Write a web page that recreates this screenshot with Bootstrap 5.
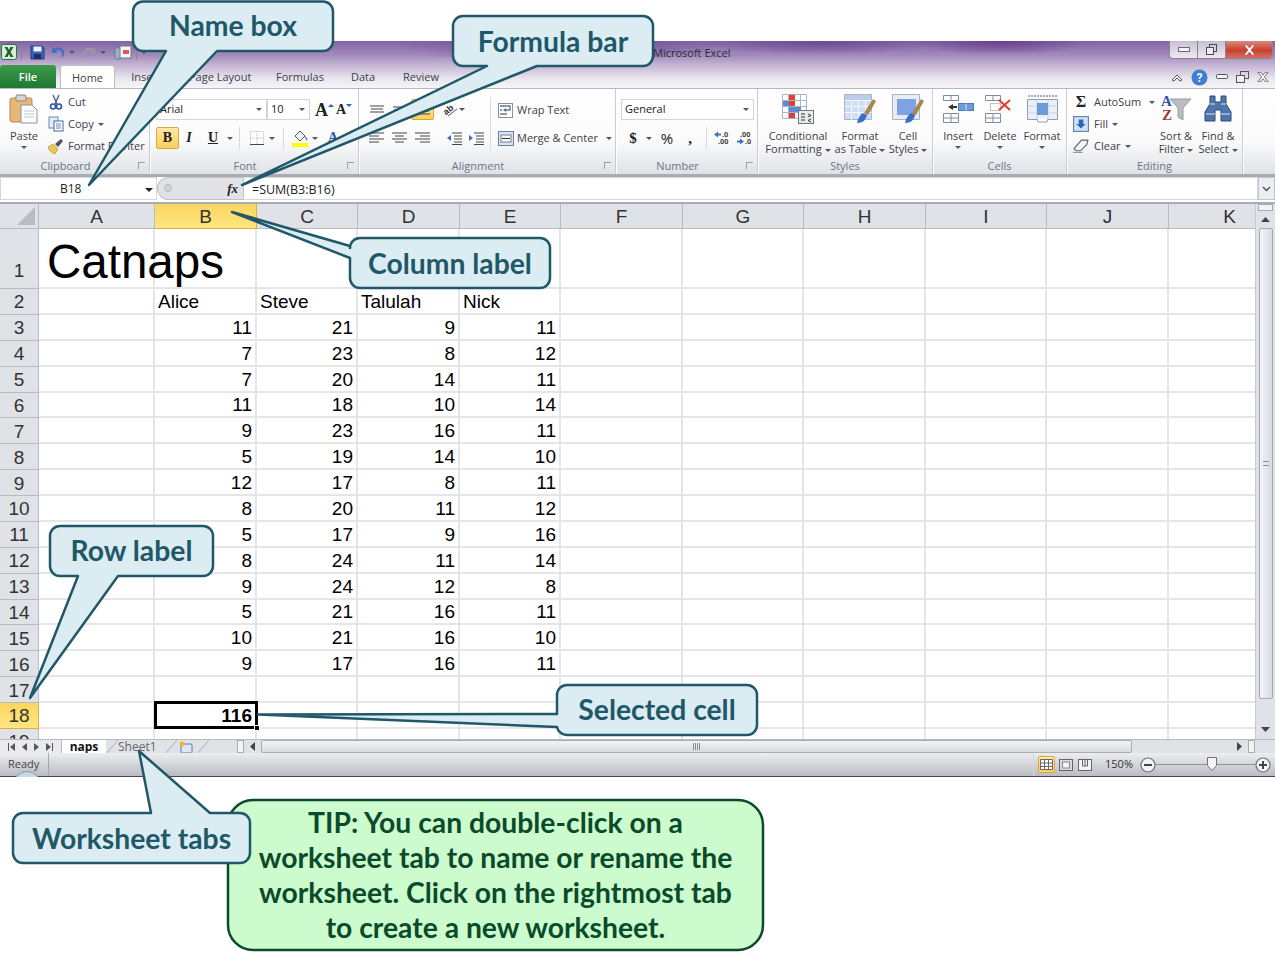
<!DOCTYPE html>
<html lang="en">
<head>
  <meta charset="UTF-8" />
  <meta name="viewport" content="width=device-width, initial-scale=1" />
  <title>Excel worksheet parts</title>
  <link href="https://cdn.jsdelivr.net/npm/bootstrap@5.3.0/dist/css/bootstrap.min.css" rel="stylesheet" />
  <style>
    body { background: #fff; font-family: "Open Sans", sans-serif; font-size: 11px; color: #3c4148; }
    .xl-page { position: relative; width: 1275px; height: 963px; overflow: hidden; }
    .xl-window { position: absolute; left: 0; top: 41px; width: 1275px; height: 736px; }

    /* title bar */
    .xl-title { height: 24px; padding-left: 1px; position: relative;
      background:
        radial-gradient(ellipse 90px 14px at 1000px 0, #6a3f8c, transparent),
        radial-gradient(ellipse 120px 14px at 820px 0, #6f4a92, transparent),
        radial-gradient(ellipse 160px 18px at 560px 4px, #6f4a92, transparent),
        linear-gradient(180deg, #8064a4 0, #a28bbc 60%, #c4b5d3 100%); }
    .xl-qat { height: 22px; }
    .q-save { margin-left: 0; }
    .q-undo { margin-left: 6px; }
    .xl-doc-title { position: absolute; left: 653px; top: 4px; font-size: 11px; color: #2c2c2c; }
    .xl-winbtns { position: absolute; left: 1169px; top: 0; width: 104px; height: 18px; border: 1px solid #8b8298; border-top: 0; border-radius: 0 0 4px 4px; background: linear-gradient(180deg, #c7bfd0, #eeeaf1); }
    .xl-winbtns > div { height: 100%; width: 28px; display: flex; align-items: center; justify-content: center; border-right: 1px solid #8b8298; }
    .xl-winbtns > .xl-close { width: 46px; border: 0; border-radius: 0 0 3px 0; background: linear-gradient(180deg, #d98a80, #c8402f 55%, #d76f60); color: #fff; }

    /* ribbon tabs */
    .xl-tabs { height: 23px; background: linear-gradient(180deg, #c4b5d3 0, #eae6ee 60%, #f6f5f7 100%); position: relative; }
    .xl-tab { height: 23px; line-height: 24px; text-align: center; color: #3c4148; white-space: nowrap; }
    .xl-tab-file { width: 56px; background: linear-gradient(180deg, #3c9a4c, #1d7a30); color: #fff; font-weight: 600; border-radius: 3px 3px 0 0; margin-right: 4px; }
    .xl-tab-home { width: 55px; background: #fff; border: 1px solid #b9bec4; border-bottom: 0; border-radius: 3px 3px 0 0; }
    .xl-t-ins { width: 52px; padding-left: 10px; }
    .xl-t-page { width: 83px; padding-left: 22px; }
    .xl-t-form { width: 78px; padding-left: 22px; }
    .xl-t-data { width: 50px; padding-left: 20px; }
    .xl-t-rev { width: 64px; padding-left: 22px; }
    .xl-t-view { width: 50px; padding-left: 30px; }
    .xl-tabicons { position: absolute; left: 1167px; top: 1px; width: 106px; height: 22px; }

    /* ribbon */
    .xl-ribbon { height: 89px; display: flex; border-top: 1px solid #b4b9bf; border-bottom: 3px solid #a9adb3; background: linear-gradient(180deg, #fff 0, #fbfbfc 60%, #dfe2e6 100%); }
    .rb-group { display: flex; flex-direction: column; border-right: 1px solid #c9ccd0; box-shadow: 1px 0 0 #fff; flex-shrink: 0; }
    .rb-main { height: 70px; display: flex; }
    .rb-label { height: 15px; line-height: 14px; text-align: center; color: #6b7584; position: relative; }
    .rb-label-l { padding-right: 18px; }
    .rb-launch { position: absolute; right: 4px; top: 3px; width: 7px; height: 7px; border: 1px solid #9aa0a8; border-width: 1px 0 0 1px; }
    .rb-clip { width: 150px; } .rb-font { width: 209px; } .rb-align { width: 257px; }
    .rb-num { width: 142px; } .rb-styles { width: 175px; } .rb-cells { width: 134px; } .rb-edit { width: 176px; }
    .rb-big { display: flex; flex-direction: column; align-items: center; padding-top: 5px; line-height: 13px; text-align: center; white-space: nowrap; flex-shrink: 0; }
    .rb-big svg { height: 30px; margin-bottom: 5px; flex-shrink: 0; }
    .rb-small { height: 22px; display: flex; align-items: center; white-space: nowrap; }
    .rb-small svg { flex-shrink: 0; }
    .xl-caret { display: inline-block; width: 0; height: 0; border: 3px solid transparent; border-top: 3px solid #555; border-bottom: 0; vertical-align: middle; }
    .rb-combo { height: 21px; background: #fff; border: 1px solid #d1d4d8; display: flex; align-items: center; justify-content: space-between; padding: 0 4px 0 3px; color: #222; }
    .rb-sep { width: 1px; height: 22px; background: #d8dadd; flex-shrink: 0; }
    .rb-on { background: linear-gradient(180deg, #fde9a8, #fbcf5c); border: 1px solid #d9a63f; border-radius: 2px; }
    .rb-serif { font-family: "Liberation Serif", serif; font-weight: 700; color: #222; line-height: 1; }
    .rb-row { display: flex; align-items: center; }

    .c-paste { width: 48px; padding-top: 5px; }
    .c-stack { padding-top: 2px; }
    .c-stack svg { width: 16px; height: 16px; margin-right: 4px; }
    .f-col { padding: 10px 0 0 6px; }
    .f-name { width: 111px; } .f-size { width: 43px; margin-right: 5px; }
    .f-grow { width: 16px; height: 21px; display: flex; align-items: center; font-size: 18px; flex-shrink: 0; }
    .f-shrink { width: 16px; height: 21px; margin-left: 5px; display: flex; align-items: center; font-size: 14px; flex-shrink: 0; }
    .f-grow svg, .f-shrink svg { align-self: start; margin-top: 4px; flex-shrink: 0; }
    .f-b { width: 23px; height: 22px; font-size: 14px; display: flex; align-items: center; justify-content: center; }
    .f-row2 { margin-top: 7px; height: 22px; }
    .f-btn { display: flex; align-items: center; justify-content: center; font-size: 14px; flex-shrink: 0; }
    .f-i { width: 20px; font-style: italic; }
    .f-u { width: 28px; text-decoration: underline; }
    .f-sep1 { margin-left: 6px; }
    .f-bord { margin-left: 10px; }
    .f-car2 { margin-left: 5px; }
    .f-sep2 { margin-left: 8px; }
    .f-fill { margin-left: 8px; }
    .f-car3 { margin-left: 3px; }
    .f-col-a { width: 20px; margin-left: 5px; color: #2d55a8; }
    .f-col-a span { border-bottom: 2px solid #d8392b; line-height: 13px; }
    .a-col { padding: 10px 0 0 6px; width: 125px; flex-shrink: 0; }
    .a-cell { width: 23px; height: 21px; display: flex; align-items: center; justify-content: center; flex-shrink: 0; }
    .a-in1 { margin-left: 13px; }
    .a-in2 { margin-left: 7px; }
    .a-sep { margin: 8px 0 8px 6px; }
    .w-col { padding: 11px 0 0 7px; }
    .w-col svg { margin-right: 3px; }
    .w-row { height: 21px; }
    .n-col { padding: 10px 0 0 5px; }
    .n-combo { width: 133px; }
    .n-cell { display: flex; align-items: center; justify-content: center; flex-shrink: 0; font-size: 15px; color: #222; }
    .n-d { width: 24px; } .n-c { width: 8px; } .n-p { width: 28px; } .n-k { width: 18px; }
    .n-sep { margin-left: 7px; } .n-dec1 { margin-left: 7px; } .n-dec2 { margin-left: 5px; }
    .s-cond { width: 72px; margin-left: 4px; } .s-tab { width: 52px; } .s-cell { width: 44px; }
    .c-ins { width: 42px; margin-left: 4px; } .c-del, .c-fmt { width: 42px; }
    .e-stack { width: 84px; margin-left: 5px; flex-shrink: 0; }
    .e-icon { width: 22px; padding-right: 4px; display: flex; justify-content: center; flex-shrink: 0; }
    .e-icon svg { margin-right: 0; }
    .e-sort { width: 40px; } .e-find { width: 44px; }

    /* formula bar */
    .xl-fbar { height: 26px; display: flex; padding: 0 0 1px; background: #fff; border-bottom: 1px solid #a9adb3; font-size: 12.5px; }
    .xl-namebox { width: 157px; height: 23px; display: flex; align-items: center; position: relative; padding-left: 59px; color: #222; border: 1px solid #d4d7db; font-size: 12px; }
    .xl-namebox .xl-caret { position: absolute; right: 3px; top: 10px; border-width: 4px; border-top-color: #222; border-bottom: 0; }
    .xl-fx { width: 86px; height: 23px; background: #e0e2e6; border-radius: 12px 0 0 12px; border: 1px solid #c0c4c9; border-right: 0; display: flex; align-items: center; justify-content: end; padding-right: 5px; font-family: "Liberation Serif", serif; font-style: italic; font-weight: 700; font-size: 13px; color: #222; position: relative; }
    .xl-fx::before { content: ""; position: absolute; left: 6px; top: 6px; width: 8px; height: 8px; border-radius: 50%; background: #cfd2d6; border: 1px solid #b5b9be; }
    .xl-input { flex: 1; height: 23px; line-height: 23px; padding-left: 8px; color: #222; border: 1px solid #d4d7db; border-left: 1px solid #c0c4c9; }
    .xl-fdrop { width: 17px; height: 23px; border: 1px solid #c0c4c9; background: #eceef1; display: flex; align-items: center; justify-content: center; }

    /* sheet */
    .xl-body { height: 536px; display: flex; border-top: 1px solid #a9adb3; }
    .xl-sheet { width: 1255px; height: 535px; overflow: hidden; display: grid;
      grid-template-columns: 39px 116px 102px 101px 102px 101px 122px 121px 122px 121px 122px 122px;
      grid-template-rows: 25px 60px repeat(18, 25.875px);
      font-family: "Liberation Sans", sans-serif; font-size: 19px; color: #000; }
    .xl-cell { border-right: 2px solid #e4e5e7; border-bottom: 2px solid #e4e5e7; padding: 1px 3px 0; display: flex; align-items: center; line-height: 1; position: relative; white-space: nowrap; overflow: visible; }
    .xl-num { justify-content: end; padding-right: 3px; }
    .xl-head { background: #dfe2e7; border-right: 1px solid #b8bcc1; border-bottom: 1px solid #b8bcc1; justify-content: center; color: #333; }
    .xl-row-1 { align-items: end; padding-bottom: 8px; }
    .xl-head-on { background: linear-gradient(180deg, #fbd560, #fee682); border-color: #e0ad45; }
    .xl-corner { position: relative; }
    .xl-corner::after { content: ""; position: absolute; right: 3px; bottom: 3px; border: 9px solid #b9bcc1; border-left-color: transparent; border-top-color: transparent; }
    .xl-big { font-size: 47.5px; padding: 0 0 2px 8px; align-items: end; }
    .xl-selected { font-weight: 700; }
    .xl-selected::after { content: ""; position: absolute; left: -1px; top: -2px; width: 104px; height: 28px; border: 3px solid #000; }
    .xl-selected::before { content: ""; position: absolute; left: 99px; top: 22px; width: 6px; height: 6px; background: #000; border: 1px solid #fff; z-index: 1; }
    .xl-vscroll { width: 20px; height: 535px; background: #dfe2e7; display: flex; flex-direction: column; align-items: center; border-left: 1px solid #c6c9cd; }
    .xl-split { width: 15px; height: 7px; background: #f2f3f5; border: 1px solid #a9adb3; margin-top: 0; }
    .xl-arrowbtn { height: 17px; display: flex; align-items: center; }
    .xl-thumb { width: 14px; height: 471px; margin: 0 0 22px; background: linear-gradient(90deg, #f3f4f6, #d8dbe0); border: 1px solid #a5a9af; border-radius: 2px; display: flex; align-items: center; justify-content: center; }
    .xl-grip-h { width: 6px; height: 5px; border-top: 1px solid #8a8e94; border-bottom: 1px solid #8a8e94; }

    /* worksheet tabs */
    .xl-sheetbar { height: 14px; display: flex; align-items: stretch; background: #dfe2e7; border-top: 1px solid #b8bcc1; line-height: 13px; font-size: 12px; position: relative; }
    .xl-navs { width: 62px; display: flex; align-items: center; justify-content: space-around; padding: 0 4px; border-right: 1px solid #b8bcc1; background: #e8eaed; flex-shrink: 0; }
    .xl-stab { height: 14px; font-family: "Open Sans", sans-serif; flex-shrink: 0; }
    .xl-stab-on { width: 44px; background: #fff; font-weight: 700; color: #111; text-align: center; }
    .xl-stab-off { width: 47px; color: #666; }
    .xl-stab-new { width: 20px; padding-left: 1px; }
    .xl-slant { flex-shrink: 0; }
    .xl-splitbar { width: 7px; background: #f3f4f6; border: 1px solid #a9adb3; flex-shrink: 0; }
    .xl-split-1 { margin-left: 28px; }
    .xl-harrow { width: 17px; display: flex; align-items: center; justify-content: center; flex-shrink: 0; }
    .xl-hend { width: 20px; }
    .xl-hthumb { width: 871px; background: linear-gradient(180deg, #f2f3f5, #d9dce0); border: 1px solid #a9adb3; border-radius: 2px; display: flex; align-items: center; justify-content: center; flex-shrink: 0; }
    .xl-grip-v { width: 7px; height: 7px; background: repeating-linear-gradient(90deg, #8a8e94 0 1px, transparent 1px 2px); }

    /* status bar */
    .xl-status { height: 24px; display: flex; align-items: center; border-bottom: 1px solid #4d4458; background: linear-gradient(180deg, #eceef0, #b9bcc1); position: relative; }
    .xl-ready { width: 49px; padding-left: 8px; height: 23px; line-height: 22px; border-right: 1px solid #a4a8ad; color: #444; }
    .xl-macro { position: absolute; left: 13px; top: 18px; width: 28px; height: 28px; border-radius: 50%; background: #c8d8e8; border: 1px solid #7f95ad; clip-path: inset(0 0 22px 0); }
    .xl-zoomtxt { width: 42px; text-align: center; margin-left: 3px; color: #333; }
    .xl-view { width: 17px; height: 17px; display: flex; align-items: center; justify-content: center; margin-right: 2px; }
    .xl-view-on { background: linear-gradient(180deg, #fde9a8, #fbcf5c); border: 1px solid #d9a63f; border-radius: 2px; }
    .xl-slider { width: 101px; height: 1px; background: #8f9398; position: relative; margin: 0 -1px; }
    .xl-slider svg { position: absolute; left: 52px; top: -7px; }

    /* callouts */
    .xl-callouts { position: absolute; left: 0; top: 0; width: 1275px; height: 963px; pointer-events: none; }
    .xl-label { position: absolute; display: flex; align-items: center; justify-content: center; font-family: Lato, sans-serif; font-weight: 700; font-size: 28.3px; color: #215868; white-space: nowrap; line-height: 1; }
    .l-name { left: 133px; top: 0; width: 200px; height: 50px; }
    .l-formula { left: 453px; top: 16px; width: 200px; height: 50px; }
    .l-col { left: 350px; top: 238px; width: 200px; height: 50px; }
    .l-row { left: 50px; top: 525px; width: 163px; height: 50px; }
    .l-sel { left: 557px; top: 684px; width: 200px; height: 50px; }
    .l-tabs { left: 13px; top: 813px; width: 237px; height: 50px; }
    .l-tip { left: 228px; top: 805px; width: 535px; height: 140px; color: #0b4a2a; text-align: center; line-height: 35px; white-space: normal; }
  </style>
</head>
<body>
  <div class="xl-page">
    <div class="xl-window">

      <!-- barra de titulo -->
      <div class="xl-title">
        <div class="xl-qat d-flex align-items-center">
          <svg width="16" height="16" viewBox="0 0 16 16"><rect x=".5" y=".5" width="15" height="15" rx="2" fill="#dcebd8" stroke="#1d7a34"/><path d="M3.500 3h3l1.500 3 1.500-3h3L9.500 8l3 5h-3L8 10l-1.500 3h-3l3-5z" fill="#14662a"/></svg>
          <svg class="ms-1 me-2" width="1" height="16"><rect width="1" height="16" fill="#8f7fa3"/></svg>
          <svg class="q-save" width="15" height="15" viewBox="0 0 15 15"><path d="M1 1h11l2 2v11H1z" fill="#3a5fb0" stroke="#25407f"/><rect x="3.500" y="1.500" width="8" height="5" fill="#eef2fa"/><rect x="4" y="9" width="7" height="5" fill="#1d2f66"/></svg>
          <svg class="q-undo" width="14" height="13" viewBox="0 0 14 13"><path d="M1 1v6h6L4.800 4.800C7 3.200 10 4 11 7.500c.4 1.500 0 3-.6 4.500C13 10 14 7 12.500 4.300 10.800 1.200 6.500.6 3.500 2.800z" fill="#3f6fc4"/></svg>
          <span class="xl-caret ms-1"></span>
          <svg class="ms-2" width="13" height="13" viewBox="0 0 14 13"><path d="M13 1v6H7l2.200-2.200C7 3.200 4 4 3 7.500c-.4 1.500 0 3 .6 4.500C1 10 0 7 1.500 4.300 3.200 1.200 7.500.6 10.500 2.800z" fill="#9b96a6"/></svg>
          <span class="xl-caret ms-1"></span>
          <svg class="ms-2" width="18" height="16" viewBox="0 0 18 16"><rect x="1" y="4" width="6" height="11" rx="1" fill="#9fb0cc" stroke="#6b7a94"/><rect x="6" y="2" width="11" height="12" fill="#f5f5f7" stroke="#77787f"/><rect x="9" y="6" width="6" height="4" fill="#d65c50"/></svg>
          <svg class="ms-1" width="1" height="16"><rect width="1" height="16" fill="#8f7fa3"/></svg>
          <span class="xl-caret ms-1"></span>
        </div>
        <div class="xl-doc-title">Microsoft Excel</div>
        <div class="xl-winbtns d-flex">
          <div><svg width="12" height="5"><rect x=".5" y=".5" width="11" height="4" fill="#f4f2f6" stroke="#6e6680"/></svg></div>
          <div><svg width="11" height="11"><rect x="3.500" y=".5" width="7" height="7" fill="none" stroke="#4e4860"/><rect x=".5" y="3.500" width="7" height="7" fill="#eeeaf1" stroke="#4e4860"/></svg></div>
          <div class="xl-close"><svg width="13" height="10" viewBox="0 0 13 10"><path d="M1 0h3l2.500 3L9 0h3L8 5l4 5H9L6.500 7 4 10H1l4-5z" fill="#fff" stroke="#8c3328" stroke-width=".5"/></svg></div>
        </div>
      </div>

      <!-- pestañas -->
      <div class="xl-tabs d-flex">
        <div class="xl-tab xl-tab-file">File</div>
        <div class="xl-tab xl-tab-home">Home</div>
        <div class="xl-tab xl-t-ins">Insert</div>
        <div class="xl-tab xl-t-page">Page Layout</div>
        <div class="xl-tab xl-t-form">Formulas</div>
        <div class="xl-tab xl-t-data">Data</div>
        <div class="xl-tab xl-t-rev">Review</div>
        <div class="xl-tab xl-t-view">View</div>
        <div class="xl-tabicons d-flex align-items-center">
          <svg class="ms-1" width="12" height="9" viewBox="0 0 12 9"><path d="M1 7l5-5 5 5-2 1-3-3-3 3z" fill="#f4f4f6" stroke="#555" stroke-width="1"/></svg>
          <svg class="ms-2" width="17" height="17" viewBox="0 0 17 17"><circle cx="8.500" cy="8.500" r="8" fill="#3f7fd0"/><path d="M5.800 6.500c.2-3.500 5.900-3.200 5.600 0-.2 1.900-2.200 1.900-2.200 3.600H7.500c0-2.500 2-2.300 2-3.700 0-1.200-1.800-1.100-1.900.3z" fill="#fff"/><rect x="7.500" y="11.200" width="1.800" height="1.800" fill="#fff"/></svg>
          <svg class="ms-2" width="12" height="6"><rect x=".5" y=".5" width="11" height="4" rx="1" fill="#f4f4f6" stroke="#555"/></svg>
          <svg class="ms-2" width="13" height="12"><rect x="4.500" y=".5" width="8" height="7" fill="none" stroke="#555"/><rect x=".5" y="4.500" width="8" height="7" fill="#f0eff2" stroke="#555"/></svg>
          <svg class="ms-2" width="12" height="10" viewBox="0 0 13 10"><path d="M1 0h3l2.500 3L9 0h3L8 5l4 5H9L6.500 7 4 10H1l4-5z" fill="#f4f4f6" stroke="#555" stroke-width=".8"/></svg>
        </div>
      </div>

      <!-- cinta -->
      <div class="xl-ribbon">

        <div class="rb-group rb-clip">
          <div class="rb-main">
            <div class="rb-big c-paste">
              <svg width="30" height="30" viewBox="0 0 30 30"><rect x="1" y="4" width="22" height="24" rx="2" fill="#e5b878" stroke="#b88a4a"/><rect x="7" y="1" width="10" height="6" rx="1" fill="#d8d4cc" stroke="#8d8678"/><path d="M12 11h11l5 5v13H12z" fill="#fcfcfd" stroke="#8e939a"/><path d="M15 17h10M15 20h10M15 23h10" stroke="#c3c7cd"/></svg>
              <span>Paste</span>
              <span class="xl-caret mt-1"></span>
            </div>
            <div class="c-stack">
              <div class="rb-small"><svg viewBox="0 0 16 16"><path d="M5 1l4 9M11 1L7 10" stroke="#5a6270" stroke-width="1.500"/><circle cx="5" cy="12.500" r="2.500" fill="none" stroke="#2d55a8" stroke-width="1.600"/><circle cx="11" cy="12.500" r="2.500" fill="none" stroke="#2d55a8" stroke-width="1.600"/></svg>Cut</div>
              <div class="rb-small"><svg viewBox="0 0 16 16"><rect x="1" y="1" width="9" height="11" fill="#e6edf8" stroke="#6f88b5"/><rect x="6" y="5" width="9" height="10" fill="#fff" stroke="#3f66b0"/><path d="M8 8h5M8 10h5M8 12h5" stroke="#6f88b5"/></svg>Copy <span class="xl-caret ms-1"></span></div>
              <div class="rb-small"><svg viewBox="0 0 16 16"><path d="M0 9l5-3 5 5-3 5C4 15 1 13 0 9z" fill="#e8c850" stroke="#a8872c" stroke-width=".6"/><path d="M7 6l6-5 2 2-5 6z" fill="#4e525a"/></svg>Format Painter</div>
            </div>
          </div>
          <div class="rb-label rb-label-l">Clipboard<span class="rb-launch"></span></div>
        </div>

        <div class="rb-group rb-font">
          <div class="rb-main">
            <div class="f-col">
              <div class="rb-row">
                <div class="rb-combo f-name"><span>Arial</span><span class="xl-caret"></span></div>
                <div class="rb-combo f-size"><span>10</span><span class="xl-caret"></span></div>
                <div class="rb-serif f-grow">A<svg width="6" height="5"><path d="M0 4l3-3 3 3z" fill="#2d66b8"/></svg></div>
                <div class="rb-serif f-shrink">A<svg width="6" height="5"><path d="M0 1l3 3 3-3z" fill="#2d66b8"/></svg></div>
              </div>
              <div class="rb-row f-row2">
                <div class="rb-serif rb-on f-b">B</div>
                <div class="rb-serif f-btn f-i">I</div>
                <div class="rb-serif f-btn f-u">U</div>
                <span class="xl-caret"></span>
                <div class="rb-sep f-sep1"></div>
                <svg class="f-bord" width="14" height="14" viewBox="0 0 14 14"><rect x=".5" y=".5" width="13" height="13" fill="#fff" stroke="#b3b6ba" stroke-dasharray="1 1"/><path d="M7 0v14M0 7h14" stroke="#b3b6ba" stroke-dasharray="1 1"/><path d="M0 13.500h14" stroke="#444"/></svg>
                <span class="xl-caret f-car2"></span>
                <div class="rb-sep f-sep2"></div>
                <svg class="f-fill" width="17" height="18" viewBox="0 0 17 18"><path d="M3 7l5-5 5 5-5 5z" fill="#eef0f3" stroke="#555"/><path d="M13 7c2 2 3 3 2 5-1-1-2-3-2-5z" fill="#3f6fc4"/><rect y="14" width="16" height="4" fill="#ffff00"/></svg>
                <span class="xl-caret f-car3"></span>
                <div class="rb-serif f-btn f-col-a"><span>A</span></div>
              </div>
            </div>
          </div>
          <div class="rb-label rb-label-l">Font<span class="rb-launch"></span></div>
        </div>

        <div class="rb-group rb-align">
          <div class="rb-main">
            <div class="a-col">
              <div class="rb-row">
                <div class="a-cell"><svg width="14" height="10"><path d="M0 1h14M1 4h12M0 7h14" stroke="#444" stroke-width="1.200"/></svg></div>
                <div class="a-cell"><svg width="14" height="10"><path d="M0 2h14M1 5h12M0 8h14" stroke="#444" stroke-width="1.200"/></svg></div>
                <div class="a-cell rb-on"><svg width="14" height="10"><path d="M0 3h14M1 6h12M0 9h14" stroke="#444" stroke-width="1.200"/></svg></div>
                <svg class="ms-2" width="17" height="17" viewBox="0 0 17 17"><text x="1" y="12" transform="rotate(-40 6 9)" font-family="Liberation Sans" font-size="9" font-weight="700" fill="#333">ab</text><path d="M6 15L15 8" stroke="#555"/></svg>
                <span class="xl-caret"></span>
              </div>
              <div class="rb-row f-row2">
                <div class="a-cell"><svg width="15" height="12"><path d="M0 1h15M0 4h10M0 7h15M0 10h10" stroke="#444" stroke-width="1.200"/></svg></div>
                <div class="a-cell"><svg width="15" height="12"><path d="M0 1h15M3 4h9M0 7h15M3 10h9" stroke="#444" stroke-width="1.200"/></svg></div>
                <div class="a-cell"><svg width="15" height="12"><path d="M0 1h15M5 4h10M0 7h15M5 10h10" stroke="#444" stroke-width="1.200"/></svg></div>
                <svg class="a-in1" width="15" height="13"><path d="M5 1h10M7 4h8M7 7h8M7 10h8M5 12.500h10" stroke="#444"/><path d="M0 6l4-3v6z" fill="#3f6fc4"/></svg>
                <svg class="a-in2" width="15" height="13"><path d="M5 1h10M7 4h8M7 7h8M7 10h8M5 12.500h10" stroke="#444"/><path d="M4 6L0 3v6z" fill="#3f6fc4"/></svg>
              </div>
            </div>
            <div class="rb-sep a-sep h-auto"></div>
            <div class="w-col">
              <div class="rb-row w-row"><svg width="16" height="15" viewBox="0 0 16 15"><rect x=".5" y=".5" width="14" height="14" fill="#fff" stroke="#8b8f96"/><path d="M2 3h10v4H7M2 7h2M2 11h7" stroke="#6f7680" stroke-width="1.400" fill="none"/><path d="M8 5L5 7l3 2z" fill="#3f6fc4"/></svg>Wrap Text</div>
              <div class="rb-row w-row f-row2"><svg width="16" height="15" viewBox="0 0 16 15"><rect x=".5" y=".5" width="15" height="14" fill="#d8e4f4" stroke="#6f7f98"/><rect x="3" y="4" width="10" height="7" fill="#fff" stroke="#6f7f98"/><path d="M4 7.500h8" stroke="#333"/></svg>Merge &amp; Center<span class="xl-caret ms-2"></span></div>
            </div>
          </div>
          <div class="rb-label rb-label-l">Alignment<span class="rb-launch"></span></div>
        </div>

        <div class="rb-group rb-num">
          <div class="rb-main">
            <div class="n-col">
              <div class="rb-combo n-combo"><span>General</span><span class="xl-caret"></span></div>
              <div class="rb-row f-row2">
                <div class="n-cell n-d rb-serif">$</div>
                <div class="n-cell n-c"><span class="xl-caret"></span></div>
                <div class="n-cell n-p">%</div>
                <div class="n-cell n-k rb-serif">,</div>
                <div class="rb-sep n-sep"></div>
                <svg class="n-dec1" width="17" height="14" viewBox="0 0 17 14"><path d="M0 3.500l4-3v2h3v2H4v2z" fill="#3f6fc4"/><text x="8" y="6" font-family="Liberation Sans" font-size="7.500" font-weight="700" fill="#333">.0</text><text x="4" y="12.500" font-family="Liberation Sans" font-size="7.500" font-weight="700" fill="#333">.00</text></svg>
                <svg class="n-dec2" width="17" height="14" viewBox="0 0 17 14"><text x="4" y="6" font-family="Liberation Sans" font-size="7.500" font-weight="700" fill="#333">.00</text><path d="M8 10.500l-4-3v2H1v2h3v2z" fill="#3f6fc4"/><text x="9" y="12.500" font-family="Liberation Sans" font-size="7.500" font-weight="700" fill="#333">.0</text></svg>
              </div>
            </div>
          </div>
          <div class="rb-label rb-label-l">Number<span class="rb-launch"></span></div>
        </div>

        <div class="rb-group rb-styles">
          <div class="rb-main">
            <div class="rb-big s-cond">
              <svg width="32" height="30" viewBox="0 0 32 30"><path d="M.5.500h24v24H.500zM.5 6.500h24M.5 12.500h24M.5 18.500h24M6.500.5v24M12.500.5v24M18.500.5v24" fill="#fff" stroke="#a9b4c4"/><rect x="7" y="1" width="6" height="5" fill="#e0402e"/><rect x="7" y="7" width="6" height="5" fill="#e0402e"/><rect x="1" y="7" width="6" height="5" fill="#5b8bd8"/><rect x="7" y="13" width="12" height="5" fill="#5b8bd8"/><rect x="7" y="19" width="6" height="5" fill="#e0402e"/><rect x="16.500" y="16.500" width="15" height="13" fill="#e8ebee" stroke="#777"/><path d="M19 20h4M19 23h4M19 26h4M26 20l3 1.500-3 1.500M29 25l-3 1.500 3 1.500" stroke="#333" fill="none"/></svg>
              <span>Conditional</span><span>Formatting <span class="xl-caret"></span></span>
            </div>
            <div class="rb-big s-tab">
              <svg width="32" height="30" viewBox="0 0 32 30"><path d="M.5.500h27v25H.500z" fill="#cfddf5" stroke="#a9b4c4"/><path d="M.5 6.500h27M.5 12.500h27M.5 18.500h27M7.500.5v25M14.500.5v25M21.500.5v25" stroke="#f4f7fc"/><rect x="1" y="1" width="26" height="5" fill="#bccde9"/><path d="M13 29c6 0 9-3 10-8l-4-2c-3 2-5 5-6 10z" fill="#3a6fc4"/><path d="M20 19l9-14 3 2-8 14z" fill="#a98748"/></svg>
              <span>Format</span><span>as Table <span class="xl-caret"></span></span>
            </div>
            <div class="rb-big s-cell">
              <svg width="32" height="30" viewBox="0 0 32 30"><path d="M.5.500h27v25H.500z" fill="#e9edf3" stroke="#a9b4c4"/><rect x="5" y="5" width="19" height="16" fill="#7ea2e4"/><path d="M13 29c6 0 9-3 10-8l-4-2c-3 2-5 5-6 10z" fill="#3a6fc4"/><path d="M20 19l9-14 3 2-8 14z" fill="#a98748"/></svg>
              <span>Cell</span><span>Styles <span class="xl-caret"></span></span>
            </div>
          </div>
          <div class="rb-label">Styles</div>
        </div>

        <div class="rb-group rb-cells">
          <div class="rb-main">
            <div class="rb-big c-ins">
              <svg width="31" height="28" viewBox="0 0 31 28"><path d="M.5.500h15v5H.500zM8 .5v5M.5 18.500h15v9H.500zM8 18.500v9M.5 23h15" fill="#fff" stroke="#7f8c9d"/><rect x="15.500" y="8.500" width="15" height="7" fill="#6f9ad8" stroke="#4f78b4"/><path d="M23 8.500v7" stroke="#cfe0f5"/><path d="M5 12l5-3v2h4v2h-4v2z" fill="#333"/></svg>
              <span>Insert</span><span class="xl-caret mt-1"></span>
            </div>
            <div class="rb-big c-del">
              <svg width="31" height="28" viewBox="0 0 31 28"><path d="M.5.500h15v5H.500zM8 .5v5M.5 18.500h15v9H.500zM8 18.500v9M.5 23h15" fill="#fff" stroke="#7f8c9d"/><rect x="5.500" y="8.500" width="10" height="7" fill="#fff" stroke="#7f8c9d" stroke-dasharray="1 1"/><path d="M14 5l11 10M25 5L14 15" stroke="#e53a2c" stroke-width="2"/></svg>
              <span>Delete</span><span class="xl-caret mt-1"></span>
            </div>
            <div class="rb-big c-fmt">
              <svg width="31" height="28" viewBox="0 0 31 28"><path d="M1 1h29" stroke="#555" stroke-dasharray="2 1"/><path d="M.5 4.500h30v20H.500z" fill="#eaf0f8" stroke="#8e9bad"/><path d="M10 4.500v20M21 4.500v20M.5 11h30M.5 18h30" stroke="#c8d2df"/><rect x="10" y="8" width="11" height="12" fill="#6f9ad8"/><path d="M10 24l1 3h9l1-3" fill="#fff" stroke="#8e9bad"/></svg>
              <span>Format</span><span class="xl-caret mt-1"></span>
            </div>
          </div>
          <div class="rb-label">Cells</div>
        </div>

        <div class="rb-group rb-edit">
          <div class="rb-main">
            <div class="c-stack e-stack">
              <div class="rb-small"><span class="e-icon rb-serif fs-6">&Sigma;</span>AutoSum <span class="xl-caret ms-2"></span></div>
              <div class="rb-small"><span class="e-icon"><svg width="14" height="14" viewBox="0 0 14 14"><rect x=".5" y=".5" width="13" height="13" fill="#cfe0f5" stroke="#5f85bd"/><path d="M5 3h4v4h2l-4 4-4-4h2z" fill="#2d66b8"/></svg></span>Fill <span class="xl-caret ms-1"></span></div>
              <div class="rb-small"><span class="e-icon"><svg width="15" height="13" viewBox="0 0 15 13"><path d="M1 9l7-8h6l-1 4-6 6H3z" fill="#f4f5f7" stroke="#5a6068"/><path d="M0 12.500h9" stroke="#8c97a6"/></svg></span>Clear <span class="xl-caret ms-1"></span></div>
            </div>
            <div class="rb-big e-sort">
              <svg width="32" height="30" viewBox="0 0 32 30"><path d="M10 5h21l-8 9v12l-5-3v-9z" fill="#b9bdc3" stroke="#9a9ea5"/><text x="1" y="12" font-family="Liberation Serif" font-weight="700" font-size="15" fill="#2d55a8">A</text><text x="2" y="26" font-family="Liberation Serif" font-weight="700" font-size="15" fill="#9b3a32">Z</text></svg>
              <span>Sort &amp;</span><span>Filter <span class="xl-caret"></span></span>
            </div>
            <div class="rb-big e-find">
              <svg width="28" height="30" viewBox="0 0 28 30"><path d="M6 2h5v6h6V2h5v8l5 8v9h-10V16h-6v11H1v-9l5-8z" fill="#4f75ad" stroke="#2e4a78"/><path d="M6 10h5M17 10h5M2 20h9M17 20h9" stroke="#a9c0e0" stroke-width="1.500"/></svg>
              <span>Find &amp;</span><span>Select <span class="xl-caret"></span></span>
            </div>
          </div>
          <div class="rb-label">Editing</div>
        </div>
      </div>

      <!-- barra de formulas -->
      <div class="xl-fbar">
        <div class="xl-namebox">B18<span class="xl-caret"></span></div>
        <div class="xl-fx">fx</div>
        <div class="xl-input">=SUM(B3:B16)</div>
        <div class="xl-fdrop"><svg width="9" height="6"><path d="M1 1l3.500 3.500L8 1" fill="none" stroke="#555" stroke-width="1.500"/></svg></div>
      </div>

      <!-- hoja -->
      <div class="xl-body">
        <div class="xl-sheet" id="hoja"></div>
        <div class="xl-vscroll">
          <div class="xl-split"></div>
          <div class="xl-arrowbtn"><svg width="9" height="5"><path d="M0 5l4.500-5L9 5z" fill="#444"/></svg></div>
          <div class="xl-thumb"><div class="xl-grip-h"></div></div>
          <div class="xl-arrowbtn"><svg width="9" height="5"><path d="M0 0l4.500 5L9 0z" fill="#444"/></svg></div>
        </div>
      </div>

      <div class="xl-sheetbar">
        <div class="xl-navs">
          <svg width="7" height="8"><path d="M0 0h1v8H0zM7 0v8L2 4z" fill="#555"/></svg>
          <svg width="5" height="8"><path d="M5 0v8L0 4z" fill="#555"/></svg>
          <svg width="5" height="8"><path d="M0 0v8l5-4z" fill="#555"/></svg>
          <svg width="7" height="8"><path d="M7 0H6v8h1zM0 0v8l5-4z" fill="#555"/></svg>
        </div>
        <div class="xl-stab xl-stab-on">naps</div>
        <svg class="xl-slant" width="12" height="14"><path d="M0 14L12 0" stroke="#a9adb3"/></svg>
        <div class="xl-stab xl-stab-off">Sheet1</div>
        <svg class="xl-slant" width="12" height="14"><path d="M0 14L12 0" stroke="#a9adb3"/></svg>
        <div class="xl-stab xl-stab-new"><svg width="15" height="13" viewBox="0 0 15 13"><rect x="3" y="3" width="11" height="9" rx="1" fill="#dce6f4" stroke="#5a7ba8"/><circle cx="4" cy="3" r="2.500" fill="#f2b632"/></svg></div>
        <svg class="xl-slant" width="12" height="14"><path d="M0 14L12 0" stroke="#a9adb3"/></svg>
        <div class="xl-splitbar xl-split-1"></div>
        <div class="xl-harrow"><svg width="5" height="9"><path d="M5 0v9L0 4.500z" fill="#444"/></svg></div>
        <div class="xl-hthumb"><div class="xl-grip-v"></div></div>
        <div class="flex-grow-1"></div>
        <div class="xl-harrow"><svg width="5" height="9"><path d="M0 0v9l5-4.500z" fill="#444"/></svg></div>
        <div class="xl-splitbar"></div>
        <div class="xl-harrow xl-hend"></div>
      </div>

      <div class="xl-status">
        <div class="xl-ready">Ready</div>
        <div class="xl-macro"></div>
        <div class="flex-grow-1 d-flex justify-content-end align-items-center">
          <div class="rb-sep me-1"></div>
          <div class="xl-view xl-view-on"><svg width="13" height="11"><path d="M.5.500h12v10H.500zM.5 4h12M.5 7.500h12M4.500.5v10M8.500.5v10" fill="#fff" stroke="#666"/></svg></div>
          <div class="xl-view"><svg width="14" height="12"><rect x=".5" y=".5" width="13" height="11" fill="#d8dade" stroke="#666"/><rect x="3.500" y="3" width="7" height="6" fill="#f3f3f4" stroke="#888"/></svg></div>
          <div class="xl-view"><svg width="14" height="12"><rect x=".5" y=".5" width="13" height="11" fill="#f3f3f4" stroke="#666"/><path d="M4.500 1v6h5V1M7 1v6" fill="none" stroke="#666"/></svg></div>
          <div class="xl-zoomtxt">150%</div>
          <svg width="16" height="16"><circle cx="8" cy="8" r="7" fill="#f2f3f5" stroke="#6f7378" stroke-width="1.200"/><path d="M4 8h8" stroke="#444" stroke-width="2"/></svg>
          <div class="xl-slider"><svg width="10" height="14"><path d="M.5.500h9v8l-4.500 5-4.500-5z" fill="#f5f5f7" stroke="#6f7378"/></svg></div>
          <svg class="me-1" width="16" height="16"><circle cx="8" cy="8" r="7" fill="#f2f3f5" stroke="#6f7378" stroke-width="1.200"/><path d="M4 8h8M8 4v8" stroke="#444" stroke-width="2"/></svg>
        </div>
      </div>
    </div>

    <!-- globos encima de la captura -->
    <svg class="xl-callouts" viewBox="0 0 1275 963">
      <g fill="#dbecf3" stroke="#215868" stroke-width="2.500" stroke-linejoin="round">
        <path d="M143 1.500H323a10 10 0 0 1 10 10V41a10 10 0 0 1-10 10H217L89 185L166 51H143a10 10 0 0 1-10-10V11.500a10 10 0 0 1 10-10Z"/>
        <path d="M463 16H643a10 10 0 0 1 10 10V56a10 10 0 0 1-10 10H537L242 185L487 66H463a10 10 0 0 1-10-10V26a10 10 0 0 1 10-10Z"/>
        <path d="M360 238H540a10 10 0 0 1 10 10V278a10 10 0 0 1-10 10H360a10 10 0 0 1-10-10V258L232 212L350 246V248a10 10 0 0 1 10-10Z"/>
        <path d="M60 526H203a10 10 0 0 1 10 10V566a10 10 0 0 1-10 10H118L30 698L78 576H60a10 10 0 0 1-10-10V536a10 10 0 0 1 10-10Z"/>
        <path d="M567 685H747a10 10 0 0 1 10 10V725a10 10 0 0 1-10 10H567a10 10 0 0 1-10-8L258 714.500L557 714V695a10 10 0 0 1 10-10Z"/>
      </g>
      <path d="M253 800H738a25 25 0 0 1 25 25V925a25 25 0 0 1-25 25H253a25 25 0 0 1-25-25V825a25 25 0 0 1 25-25Z" fill="#ccfbcd" stroke="#0b4a2a" stroke-width="2.500"/>
      <path d="M23 813H151L139 751L210 813H240a10 10 0 0 1 10 10V853a10 10 0 0 1-10 10H23a10 10 0 0 1-10-10V823a10 10 0 0 1 10-10Z" fill="#dbecf3" stroke="#215868" stroke-width="2.500" stroke-linejoin="round"/>
    </svg>
    <div class="xl-label l-name">Name box</div>
    <div class="xl-label l-formula">Formula bar</div>
    <div class="xl-label l-col">Column label</div>
    <div class="xl-label l-row">Row label</div>
    <div class="xl-label l-sel">Selected cell</div>
    <div class="xl-label l-tabs">Worksheet tabs</div>
    <div class="xl-label l-tip">TIP: You can double-click on a<br>worksheet tab to name or rename the<br>worksheet. Click on the rightmost tab<br>to create a new worksheet.</div>
  </div>

  <script>
  const columnas = ['A', 'B', 'C', 'D', 'E', 'F', 'G', 'H', 'I', 'J', 'K'];

  // Datos de la hoja, filas 3 a 16
  const datos = [
    [11, 21, 9, 11], [7, 23, 8, 12], [7, 20, 14, 11], [11, 18, 10, 14], [9, 23, 16, 11],
    [5, 19, 14, 10], [12, 17, 8, 11], [8, 20, 11, 12], [5, 17, 9, 16], [8, 24, 11, 14],
    [9, 24, 12, 8], [5, 21, 16, 11], [10, 21, 16, 10], [9, 17, 16, 11]
  ];

  const celda = (clase, texto) => `<div class="xl-cell ${clase}">${texto}</div>`;

  let html = celda('xl-head xl-corner', '');
  columnas.forEach(c => {
    html += celda(c === 'B' ? 'xl-head xl-head-on' : 'xl-head', c);
  });

  for (let fila = 1; fila <= 19; fila++) {
    let cabecera = 'xl-head';
    if (fila === 1) cabecera += ' xl-row-1';
    if (fila === 18) cabecera += ' xl-head-on';
    html += celda(cabecera, fila);

    columnas.forEach((c, i) => {
      if (fila === 1 && c === 'A') html += celda('xl-big', 'Catnaps');
      else if (fila === 2 && i >= 1 && i <= 4) html += celda('', ['Alice', 'Steve', 'Talulah', 'Nick'][i - 1]);
      else if (fila >= 3 && fila <= 16 && i >= 1 && i <= 4) html += celda('xl-num', datos[fila - 3][i - 1]);
      else if (fila === 18 && c === 'B') html += celda('xl-num xl-selected', 116);
      else html += celda('', '');
    });
  }
  document.getElementById('hoja').innerHTML = html;
  </script>

  <script src="https://cdn.jsdelivr.net/npm/bootstrap@5.3.0/dist/js/bootstrap.bundle.min.js"></script>
</body>
</html>
